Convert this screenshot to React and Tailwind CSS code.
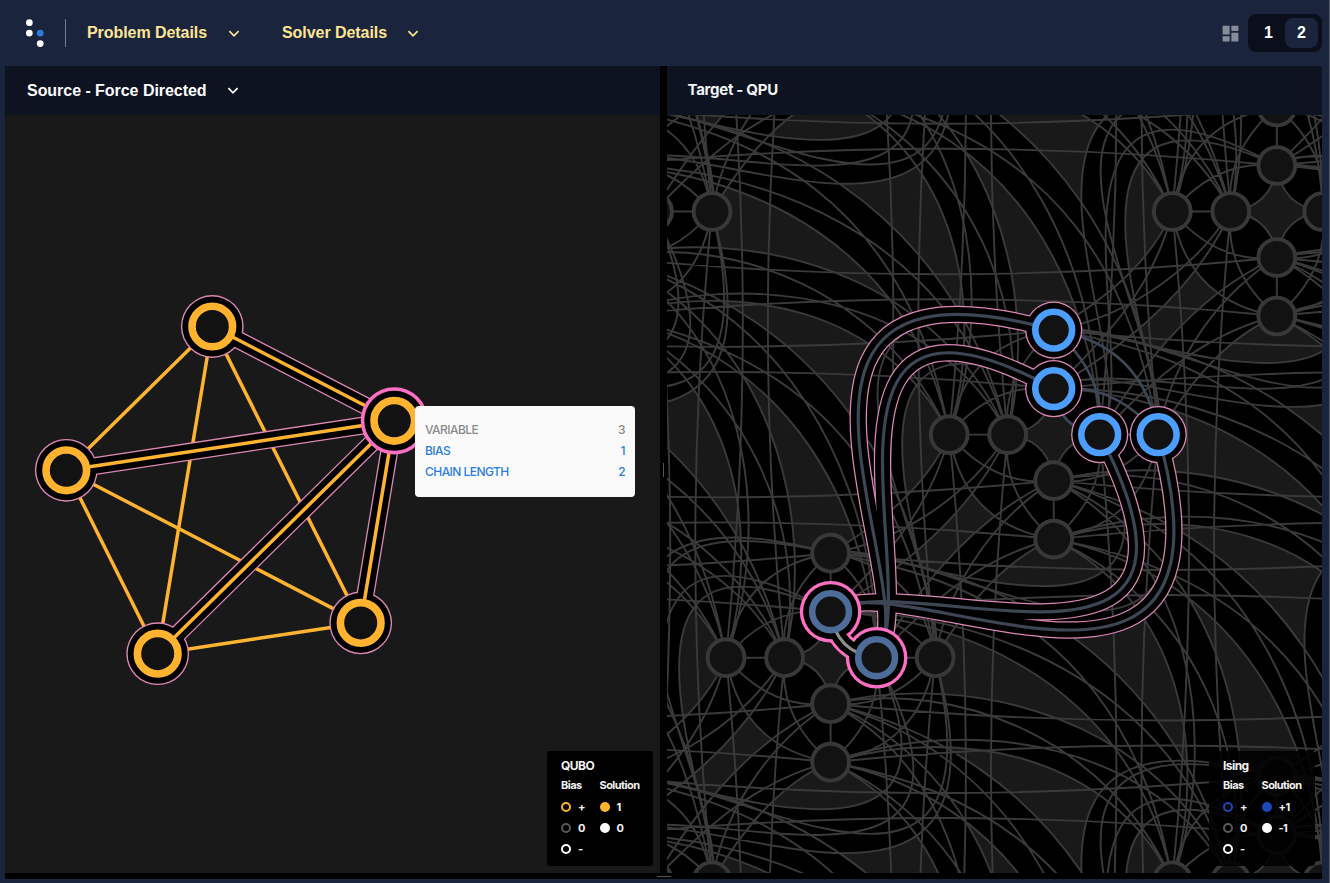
import React from "react";
import { MdDashboard } from "react-icons/md";

/* ---------- lattice geometry of the processor graph ---------- */

const STEP = 223.1;
const ORIGIN = [607.5, 211.5];
const IN = 46;
const OUT = 104.5;
const add = (p, q) => [p[0] + q[0], p[1] + q[1]];
// mirror across the anti-diagonal that runs through a cell centre
const flip = (p) => [-p[1], -p[0]];

const bez = (p0, p1, p2, p3) => [p0, p1, p2, p3];
const quad = (p0, c, p3) => [
  p0,
  [p0[0] + (2 / 3) * (c[0] - p0[0]), p0[1] + (2 / 3) * (c[1] - p0[1])],
  [p3[0] + (2 / 3) * (c[0] - p3[0]), p3[1] + (2 / 3) * (c[1] - p3[1])],
  p3,
];

// a bundle joins a pair of nodes to a pair of nodes: curves[h][v]
const nearBundle = (rows, side) =>
  [IN, OUT].map((dx, a) =>
    [IN, OUT].map((dy, b) => {
      const p0 = [dx, 0];
      const p3 = [STEP, -STEP + side * dy];
      const [h0, h3] = rows[a][b];
      return bez(p0, add(p0, h0), add(p3, h3), p3);
    })
  );

const farBundle = (rows, side) =>
  [IN, OUT].map((dx, a) =>
    [IN, OUT].map((dy, b) => {
      const p3 = [-dx, 0];
      const p0 = [-2 * STEP, -STEP + side * dy];
      const [c1, c2] = rows[a][b];
      return bez(p0, add(p0, c1), add(p0, c2), p3);
    })
  );

const flipBundle = (bundle) => bundle.map((row) => row.map((c) => c.map(flip)));

const outerRow = [[[19, -36], [-263, -121]], [[22, -95], [-325, -77]]];
const nearTop = nearBundle(
  [[[[50, -68], [-269, -147]], [[54, -66], [-338, -94]]], outerRow],
  -1
);
const nearRight = flipBundle(
  nearBundle([[[[48, -76], [-284, -148]], [[53, -66], [-337, -94]]], outerRow], -1)
);
const nearBottom = nearBundle(
  [
    [[[30, -50], [-90, 40]], [[35, -35], [-85, 20]]],
    [[[10, -60], [-70, 45]], [[20, -33], [-60, 25]]],
  ],
  1
);
const farTop = farBundle(
  [
    [[[145, -2], [345, 66]], [[145, 6], [345, 93]]],
    [[[140, 6], [305, 80]], [[140, 23], [300, 87]]],
  ],
  -1
);
const farBottom = farBundle(
  [
    [[[140, -34], [330, 14]], [[140, -50], [330, -19]]],
    [[[130, -25.5], [280, 39]], [[130, -38], [280, -7]]],
  ],
  1
);

const innerBundle = (sx, sy) =>
  [IN, OUT].map((dx) =>
    [IN, OUT].map((dy) => {
      let c;
      if (dx === IN && dy === IN) c = [5, 5];
      else if (dx === OUT && dy === OUT) c = [90, 90];
      else if (dx === OUT) c = [60, 53];
      else c = [53, 60];
      return quad([sx * dx, 0], [sx * c[0], sy * c[1]], [0, sy * dy]);
    })
  );

const BUNDLES = [
  nearTop,
  nearBottom,
  farTop,
  farBottom,
  nearRight,
  flipBundle(nearBottom),
  flipBundle(farTop),
  flipBundle(farBottom),
  innerBundle(-1, -1),
  innerBundle(-1, 1),
  innerBundle(1, -1),
  innerBundle(1, 1),
];

const SPAN = STEP * 3;
const EXTERNAL = [
  [-OUT, 1],
  [-IN, -1],
  [IN, 1],
  [OUT, -1],
].flatMap(([d, s]) => [
  quad([0, d], [SPAN / 2, d + s * 33.5], [SPAN, d]),
  quad([d, 0], [d + s * 33.5, SPAN / 2], [d, SPAN]),
]);

const CELLS = [];
for (let i = -3; i <= 6; i++)
  for (let j = -3; j <= 6; j++)
    if ((i + j + 9) % 3 === 0) CELLS.push([ORIGIN[0] + STEP * i, ORIGIN[1] + STEP * j]);

const f = (p) => `${p[0].toFixed(1)} ${p[1].toFixed(1)}`;
const at = (c, curve) => curve.map((p) => add(c, p));
const rev = (c) => [...c].reverse();
const draw = (c) => `M${f(c[0])}C${f(c[1])} ${f(c[2])} ${f(c[3])}`;
const between = (a, b) =>
  `M${f(a[0])}C${f(a[1])} ${f(a[2])} ${f(a[3])}L${f(b[0])}C${f(b[1])} ${f(b[2])} ${f(b[3])}Z`;

const FILLS = CELLS.flatMap((c) =>
  BUNDLES.flatMap((k) => {
    const g = k.map((r) => r.map((e) => at(c, e)));
    return [
      between(g[0][0], rev(g[0][1])),
      between(g[1][0], rev(g[1][1])),
      between(g[0][0], rev(g[1][0])),
      between(g[0][1], rev(g[1][1])),
    ];
  })
);

const LINES = CELLS.map((c) =>
  [...BUNDLES.flat(2), ...EXTERNAL].map((e) => draw(at(c, e))).join("") +
  [-1, 1]
    .map(
      (s) =>
        `M${f(add(c, [0, s * IN]))}L${f(add(c, [0, s * OUT]))}M${f(add(c, [s * IN, 0]))}L${f(add(c, [s * OUT, 0]))}`
    )
    .join("")
);

const NODES = CELLS.flatMap((c) =>
  [-OUT, -IN, IN, OUT].flatMap((d) => [add(c, [d, 0]), add(c, [0, d])])
);

/* ---------- selected chains ---------- */

const A = [ORIGIN[0] + STEP * 2, ORIGIN[1] + STEP];
const B = [ORIGIN[0] + STEP, ORIGIN[1] + STEP * 2];

const CHAIN_LINKS = [nearTop[0][0], nearTop[0][1], nearRight[0][0], nearRight[0][1]].map((c) =>
  draw(at(B, c))
);
const OWN_LINK = draw(at(B, innerBundle(1, -1)[0][0]));
const COUPLED = innerBundle(1, -1)
  .flat()
  .map((e) => draw(at(A, e)));
const BLUE = [
  [A[0], A[1] - OUT],
  [A[0], A[1] - IN],
  [A[0] + IN, A[1]],
  [A[0] + OUT, A[1]],
];
const OWN = [
  [B[0], B[1] - IN],
  [B[0] + IN, B[1]],
];

function Dots({ nodes, r, className }) {
  return nodes.map(([x, y], i) => <circle key={i} cx={x} cy={y} r={r} className={className} />);
}

function Paths({ list, className }) {
  return list.map((d, i) => <path key={i} d={d} className={className} />);
}

function TargetGraph() {
  return (
    <svg viewBox="667 115 655 758" className="block h-[758px] w-[655px] bg-[#191919]" fill="none">
      <Paths list={FILLS} className="fill-black" />
      <Paths list={LINES} className="stroke-[#3a3a3a] stroke-[1.9px]" />
      <Paths list={COUPLED} className="stroke-[#3d4655] stroke-[2.6px]" />
      <Dots nodes={NODES} r={18.4} className="fill-[#121212] stroke-[#383838] stroke-[3.9px]" />

      <Paths list={CHAIN_LINKS} className="stroke-[#dd88b5] stroke-[17.4px]" />
      <Dots nodes={BLUE} r={28.6} className="fill-[#dd88b5]" />
      <Paths list={CHAIN_LINKS} className="stroke-black stroke-[14.9px]" />
      <Dots nodes={BLUE} r={27.3} className="fill-black" />
      <Paths list={CHAIN_LINKS} className="stroke-[#3d4655] stroke-[3.2px]" />

      <Dots nodes={OWN} r={30.8} className="fill-[#ff70c5]" />
      <path d={OWN_LINK} className="stroke-[#ff70c5] stroke-[20px]" />
      <path d={OWN_LINK} className="stroke-black stroke-[14px]" />
      <Dots nodes={OWN} r={27.5} className="fill-black" />
      <path d={OWN_LINK} className="stroke-[#8f8f8f] stroke-3" />
      <Dots nodes={BLUE} r={18.4} className="fill-[#121212] stroke-[#4d9fff] stroke-[6.6px]" />
      <Dots nodes={OWN} r={18.4} className="fill-[#121212] stroke-[#4d6c98] stroke-[6.6px]" />
    </svg>
  );
}

/* ---------- source graph ---------- */

const V = [
  [212.3, 326.5],
  [66.3, 470.3],
  [157.7, 653.7],
  [360.7, 622.9],
];
const SEL = [394.3, 420.8];
const line = (a, b) => `M${f(a)}L${f(b)}`;
const PLAIN = V.flatMap((a, i) => V.slice(i + 1).map((b) => line(a, b)));
const SPOKES = V.map((a) => line(a, SEL));

function SourceGraph() {
  return (
    <svg viewBox="5 115 655 758" className="block h-[758px] w-[655px] bg-[#191919]" fill="none">
      <Paths list={PLAIN} className="stroke-[#ffb32f] stroke-[3.5px]" />
      <Paths list={SPOKES} className="stroke-[#dd88b5] stroke-[18px]" />
      <Dots nodes={V} r={31.4} className="fill-[#dd88b5]" />
      <Paths list={SPOKES} className="stroke-black stroke-[15.4px]" />
      <Dots nodes={V} r={30} className="fill-black" />
      <Paths list={SPOKES} className="stroke-[#ffb32f] stroke-[3.5px]" />
      <Dots nodes={[SEL]} r={31.8} className="fill-black stroke-[#ff70c5] stroke-[3.6px]" />
      <Dots nodes={[...V, SEL]} r={20.3} className="fill-[#121212] stroke-[#ffb32f] stroke-[7.6px]" />
    </svg>
  );
}

/* ---------- chrome ---------- */

function Chevron({ className }) {
  return (
    <svg viewBox="0 0 12 8" className={`h-2 w-3 shrink-0 ${className}`} fill="none" stroke="currentColor" strokeWidth="1.7">
      <path d="M1.4 1.2L6 5.8L10.6 1.2" />
    </svg>
  );
}

function Dot({ className }) {
  return <span className={`box-border block size-[10px] rounded-full ${className}`} />;
}

function Legend({ title, accent, solid, one, two, className }) {
  return (
    <div
      className={`absolute top-[636px] h-[115px] w-[106px] rounded-[3px] pl-[14px] pt-[6px] font-[Inter,sans-serif] text-[11px] font-bold tracking-[-0.55px] text-[#f2f2f2] ${className}`}
    >
      <div className="h-5 text-[12px] leading-[17px]">{title}</div>
      <div className="grid grid-cols-[38.5px_1fr] grid-rows-[21.5px_21px_21px_21px] leading-[17px]">
        <span>Bias</span>
        <span>Solution</span>
        <span className="flex h-[17px] items-center gap-[7px]"><Dot className={`border-2 ${accent}`} />+</span>
        <span className="flex h-[17px] items-center gap-[7px]"><Dot className={solid} />{one}</span>
        <span className="flex h-[17px] items-center gap-[7px]"><Dot className="border-2 border-[#5a5a5a]" />0</span>
        <span className="flex h-[17px] items-center gap-[7px]"><Dot className="bg-white" />{two}</span>
        <span className="flex h-[17px] items-center gap-[7px]"><Dot className="border-2 border-white" />-</span>
      </div>
    </div>
  );
}

export default function App() {
  return (
    <div className="flex h-[883px] w-[1330px] flex-col overflow-hidden border-r border-[#525a68] bg-[#1a253d] font-['Liberation_Sans',Arial,sans-serif]">
      <header className="flex h-[66px] shrink-0 items-center pl-[26px] pr-[7px]">
        <svg viewBox="0 0 19 29" className="h-[29px] w-[19px]">
          <circle cx="3.3" cy="3.7" r="3.4" fill="#fff" />
          <circle cx="3.3" cy="14.1" r="3.4" fill="#fff" />
          <circle cx="14.2" cy="14.1" r="3.4" fill="#2a7de1" />
          <circle cx="14.2" cy="24.6" r="3.4" fill="#fff" />
        </svg>
        <div className="ml-5 h-7 w-px bg-[#767d8a]" />
        <nav className="flex items-center whitespace-nowrap text-[16px] font-bold leading-6 tracking-[-0.06px] text-[#ffe596]">
          <span className="ml-[21px] w-[121px]">Problem Details</span>
          <Chevron className="ml-5 mt-0.5" />
          <span className="ml-[42px] w-[105px]">Solver Details</span>
          <Chevron className="ml-5 mt-0.5" />
        </nav>
        <div className="ml-auto flex items-center">
          <MdDashboard className="mr-[7.5px] size-[21px] text-[#878d98]" />
          <div className="flex h-[38px] w-[74px] items-center rounded-lg bg-[#0a0f1b] pl-1 text-[16px] font-bold text-white">
            <span className="w-[33px] text-center">1</span>
            <span className="flex h-[30px] w-[33px] items-center justify-center rounded-lg bg-[#1a253d]">2</span>
          </div>
        </div>
      </header>

      <main className="ml-[5px] flex h-[813px] w-[1317px] bg-black">
        <section className="w-[655px]">
          <div className="flex h-[49px] items-center whitespace-nowrap bg-[#0d1321] pl-[22px] text-[16px] font-bold tracking-[-0.04px] text-white">
            <span className="w-[180px]">Source - Force Directed</span>
            <Chevron className="ml-5" />
          </div>
          <div className="relative">
            <SourceGraph />
            <div className="absolute left-[410px] top-[291px] flex h-[91px] w-[220px] flex-col rounded-[4px] bg-[#fafafa] px-[10px] pt-[13px] font-[Inter,sans-serif] text-[12px] font-medium leading-[21px] tracking-[-0.55px] text-[#2a7de1]">
              <div className="flex justify-between text-[#8a8a8a]"><span>VARIABLE</span><span>3</span></div>
              <div className="flex justify-between"><span>BIAS</span><span>1</span></div>
              <div className="flex justify-between"><span>CHAIN LENGTH</span><span>2</span></div>
            </div>
            <Legend
              title="QUBO"
              accent="border-[#ffb32f]"
              solid="bg-[#ffb32f]"
              one="1"
              two="0"
              className="left-[542px] bg-black"
            />
          </div>
          <div className="flex h-[6px] items-center justify-end">
            <div className="h-px w-[3px] bg-[#555]" />
          </div>
        </section>

        <div className="flex w-[7px] flex-col items-center">
          <div className="mt-[397px] h-[14px] w-px bg-[#555]" />
          <div className="mt-[399px] h-px w-[7px] bg-[#555]" />
        </div>

        <section className="w-[655px]">
          <div className="flex h-[49px] items-center bg-[#0d1321] pl-[20.5px] font-[Inter,sans-serif] text-[15px] font-bold tracking-[-0.28px] text-[#f4f4f4]">
            Target - QPU
          </div>
          <div className="relative">
            <TargetGraph />
            <Legend
              title="Ising"
              accent="border-[#1d48ba]"
              solid="bg-[#1d48ba]"
              one="+1"
              two="-1"
              className="left-[542px] bg-black/88"
            />
          </div>
          <div className="flex h-[6px] items-center">
            <div className="h-px w-[4px] bg-[#555]" />
          </div>
        </section>
      </main>
    </div>
  );
}
